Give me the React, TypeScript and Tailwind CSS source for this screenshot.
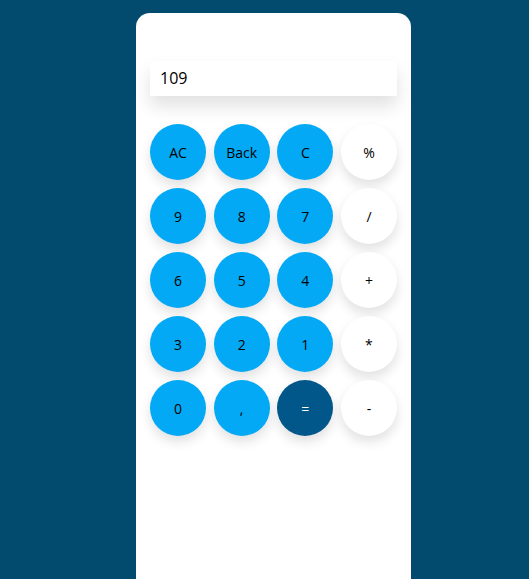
const KEYS: { label: string; kind: 'num' | 'op' | 'eq' }[] = [
  { label: 'AC', kind: 'num' },
  { label: 'Back', kind: 'num' },
  { label: 'C', kind: 'num' },
  { label: '%', kind: 'op' },
  { label: '9', kind: 'num' },
  { label: '8', kind: 'num' },
  { label: '7', kind: 'num' },
  { label: '/', kind: 'op' },
  { label: '6', kind: 'num' },
  { label: '5', kind: 'num' },
  { label: '4', kind: 'num' },
  { label: '+', kind: 'op' },
  { label: '3', kind: 'num' },
  { label: '2', kind: 'num' },
  { label: '1', kind: 'num' },
  { label: '*', kind: 'op' },
  { label: '0', kind: 'num' },
  { label: ',', kind: 'num' },
  { label: '=', kind: 'eq' },
  { label: '-', kind: 'op' },
];

const KIND_STYLES = {
  num: 'bg-[#03a9f4] text-black',
  op: 'bg-white text-black',
  eq: 'bg-[#02578a] text-white',
};

export default function App() {
  return (
    <div className="h-[579px] overflow-hidden bg-[#024b6e] pt-[13px] font-['Open_Sans','Noto_Sans',sans-serif]">
      <div className="ml-[136px] h-[620px] w-[275px] rounded-[14px] bg-white px-[14px] pt-[48px]">
        <div className="flex h-[35px] items-center bg-white px-[10px] pb-[2px] text-[16px] text-black shadow-[0_10px_18px_rgba(0,0,0,0.12)]">
          109
        </div>
        <div className="mt-[28px] grid grid-cols-4 justify-between gap-y-[8px]" style={{ gridTemplateColumns: 'repeat(4, 56px)' }}>
          {KEYS.map((k) => (
            <button
              key={k.label}
              className={`flex h-[56px] w-[56px] items-center justify-center rounded-full text-[14px] shadow-[0_6px_12px_rgba(0,0,0,0.12)] ${KIND_STYLES[k.kind]}`}
            >
              {k.label}
            </button>
          ))}
        </div>
      </div>
    </div>
  );
}
